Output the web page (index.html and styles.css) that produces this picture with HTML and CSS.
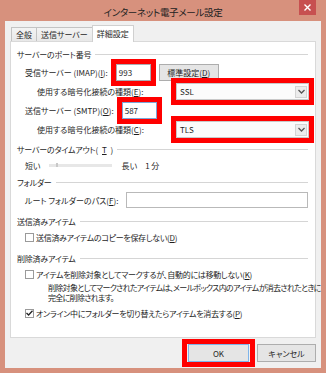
FILE: index.html
```html
<!DOCTYPE html>
<html>
<head>
    <meta charset="UTF-8">
    <title>インターネット電子メール設定</title>
    <link rel="stylesheet" href="styles.css">
</head>
<body>
    <div class="window">
        <div class="titlebar">
            <span></span>
            <span class="title">インターネット電子メール設定</span>
            <span class="close">
                <svg width="7" height="7" viewBox="0 0 7 7"><path d="M0.5 0.5L6.5 6.5M6.5 0.5L0.5 6.5" stroke="#fff" stroke-width="1.4"/></svg>
            </span>
        </div>
        <div class="client">
            <div class="tabs">
                <div class="tab">全般</div>
                <div class="tab">送信サーバー</div>
                <div class="tab active">詳細設定</div>
            </div>
            <div class="panel">
                <div class="group-title">サーバーのポート番号</div>
                <div class="ports">
                    <div class="row indent1">
                        <span>受信サーバー (IMAP)(<u>I</u>):</span>
                        <span class="mark"><span class="textbox port">993</span></span>
                        <span class="btn std">標準設定(<u>D</u>)</span>
                    </div>
                    <div class="row indent2">
                        <span>使用する暗号化接続の種類(<u>E</u>):</span>
                        <span class="mark push">
                            <span class="combo">SSL
                                <span class="drop"><svg width="7" height="5" viewBox="0 0 7 5"><path d="M0.5 1L3.5 4L6.5 1" fill="none" stroke="#555" stroke-width="1.3"/></svg></span>
                            </span>
                        </span>
                    </div>
                    <div class="row indent1">
                        <span>送信サーバー (SMTP)(<u>O</u>):</span>
                        <span class="mark"><span class="textbox port focus">587</span></span>
                    </div>
                    <div class="row indent2">
                        <span>使用する暗号化接続の種類(<u>C</u>):</span>
                        <span class="mark push">
                            <span class="combo">TLS
                                <span class="drop"><svg width="7" height="5" viewBox="0 0 7 5"><path d="M0.5 1L3.5 4L6.5 1" fill="none" stroke="#555" stroke-width="1.3"/></svg></span>
                            </span>
                        </span>
                    </div>
                </div>

                <div class="group-title gt-timeout">サーバーのタイムアウト(<u>T</u>)</div>
                <div class="row indent1 timeout">
                    <span>短い</span>
                    <span class="slider"><span class="thumb"></span></span>
                    <span class="long">長い</span>
                    <span>1 分</span>
                </div>

                <div class="group-title gt-folder">フォルダー</div>
                <div class="row indent1 root">
                    <span>ルート フォルダーのパス(<u>F</u>):</span>
                    <span class="textbox path"></span>
                </div>

                <div class="group-title gt-sent">送信済みアイテム</div>
                <div class="row indent1 check-row">
                    <span class="checkbox"></span>
                    <span>送信済みアイテムのコピーを保存しない(<u>D</u>)</span>
                </div>

                <div class="group-title gt-deleted">削除済みアイテム</div>
                <div class="row indent1 check-row">
                    <span class="checkbox"></span>
                    <span>アイテムを削除対象としてマークするが、自動的には移動しない(<u>K</u>)</span>
                </div>
                <p class="desc">削除対象としてマークされたアイテムは、メールボックス内のアイテムが消去されたときに<br>完全に削除されます。</p>
                <div class="row indent1 check-row purge">
                    <span class="checkbox checked">
                        <svg width="7" height="6" viewBox="0 0 7 6"><path d="M0.5 3L2.6 5L6.5 0.7" fill="none" stroke="#222" stroke-width="1.3"/></svg>
                    </span>
                    <span>オンライン中にフォルダーを切り替えたらアイテムを消去する(<u>P</u>)</span>
                </div>
            </div>
            <div class="buttons">
                <span class="mark wide"><span class="btn ok">OK</span></span>
                <span class="btn cancel">キャンセル</span>
            </div>
        </div>
    </div>
</body>
</html>
```

FILE: styles.css
```css
body {
    margin: 0;
    font-family: "Noto Sans CJK JP", sans-serif;
    font-size: 8px;
    font-feature-settings: "palt";
    color: #1e1e1e;
    white-space: nowrap;
}

.window {
    width: 326px;
    height: 373px;
    background: #d7917d;
    display: flex;
    flex-direction: column;
    overflow: hidden;
}

/* title bar */
.titlebar {
    height: 21px;
    display: grid;
    grid-template-columns: 1fr auto 1fr;
    align-items: start;
}
.title {
    font-size: 9.5px;
    letter-spacing: -0.3px;
    line-height: 24px;
    color: #222;
}
.close {
    justify-self: end;
    margin-right: 10px;
    width: 17px;
    height: 15px;
    background: #c75050;
    display: flex;
    align-items: center;
    justify-content: center;
}

.client {
    flex: 1;
    margin: 0 5px 5px;
    background: #f0f0f0;
    padding: 4px 5px 6px;
    display: flex;
    flex-direction: column;
}

/* tabs */
.tabs {
    display: flex;
    align-items: flex-end;
    height: 16px;
    margin-left: 1px;
}
.tab {
    box-sizing: border-box;
    height: 14px;
    border: 1px solid #c3c3c3;
    border-bottom: none;
    background: linear-gradient(#f3f3f3, #e8e8e8);
    line-height: 13px;
    padding: 0 4px;
    margin-right: -1px;
}
.tab.active {
    height: 17px;
    margin-bottom: -1px;
    padding: 0 4px;
    background: #fff;
    border-color: #d0d0d0;
    position: relative;
    z-index: 1;
    line-height: 16px;
}

.panel {
    flex: 1;
    border: 1px solid #d9d9d9;
    background: #fff;
    padding: 0 6px;
}

.group-title {
    display: flex;
    align-items: center;
    gap: 4px;
    height: 14px;
    margin-top: 5px;
    margin-right: 1px;
    letter-spacing: -0.2px;
}
.group-title::after {
    content: "";
    flex: 1;
    border-top: 1px solid #d5d5d5;
}
.gt-timeout { margin-top: 4px; }
.gt-folder { margin-top: 3px; }
.gt-sent { margin-top: 6px; }
.gt-deleted { margin-top: 7px; }

.row {
    display: flex;
    align-items: center;
    gap: 8px;
    height: 17px;
}
.indent1 { padding-left: 8px; }
.indent2 { padding-left: 20px; }

.ports {
    display: flex;
    flex-direction: column;
    gap: 2px;
    margin-top: 3px;
}

/* red highlight boxes */
.mark {
    position: relative;
    display: flex;
}
.mark::after {
    content: "";
    position: absolute;
    inset: -5px;
    border: 5px solid #ff0000;
    pointer-events: none;
}
.mark.wide::after {
    inset: -5px -6px;
}
.push { margin-left: auto; }

.textbox {
    box-sizing: border-box;
    height: 17px;
    border: 1px solid #abadb3;
    background: #fff;
    padding-left: 2px;
    line-height: 15px;
}
.port { width: 35px; }
.port.focus { border-color: #7aa7d9; }

.combo {
    box-sizing: border-box;
    width: 133px;
    height: 17px;
    border: 1px solid #c8c8c8;
    background: #fbfbfb;
    display: flex;
    align-items: center;
    justify-content: space-between;
    padding: 0 1px 0 3px;
}
.drop {
    box-sizing: border-box;
    width: 12px;
    height: 12px;
    border: 1px solid #d4d4d4;
    background: #ececec;
    display: flex;
    align-items: center;
    justify-content: center;
}

.btn {
    box-sizing: border-box;
    height: 18px;
    border: 1px solid #adadad;
    background: #e5e5e5;
    display: flex;
    align-items: center;
    justify-content: center;
}
.std { width: 60px; height: 17px; }

.timeout {
    height: 14px;
    margin-top: 2px;
}
.slider {
    width: 63px;
    height: 3px;
    background: #e7e7e7;
    position: relative;
}
.thumb {
    position: absolute;
    left: 7px;
    top: -1px;
    width: 2px;
    height: 4px;
    background: #c8c8c8;
}
.long { margin-left: 2px; }

.root {
    margin-top: 3px;
    height: 16px;
}
.path {
    margin-left: auto;
    margin-right: 1px;
    width: 188px;
    height: 16px;
    border-color: #b9b9b9;
}

.check-row {
    gap: 2px;
    height: 14px;
    margin-top: 2px;
    letter-spacing: -0.3px;
}
.checkbox {
    box-sizing: border-box;
    width: 9px;
    height: 9px;
    border: 1px solid #9a9a9a;
    background: #fff;
    display: flex;
    align-items: center;
    justify-content: center;
}
.purge { margin-top: 4px; }

.desc {
    margin: 2px 0 0;
    padding-left: 31px;
    line-height: 9.5px;
    letter-spacing: -0.7px;
}

.buttons {
    display: flex;
    justify-content: flex-end;
    gap: 8px;
    margin-top: 6px;
}
.ok {
    width: 61px;
    border-color: #7eb4ea;
}
.cancel { width: 59px; }
```
